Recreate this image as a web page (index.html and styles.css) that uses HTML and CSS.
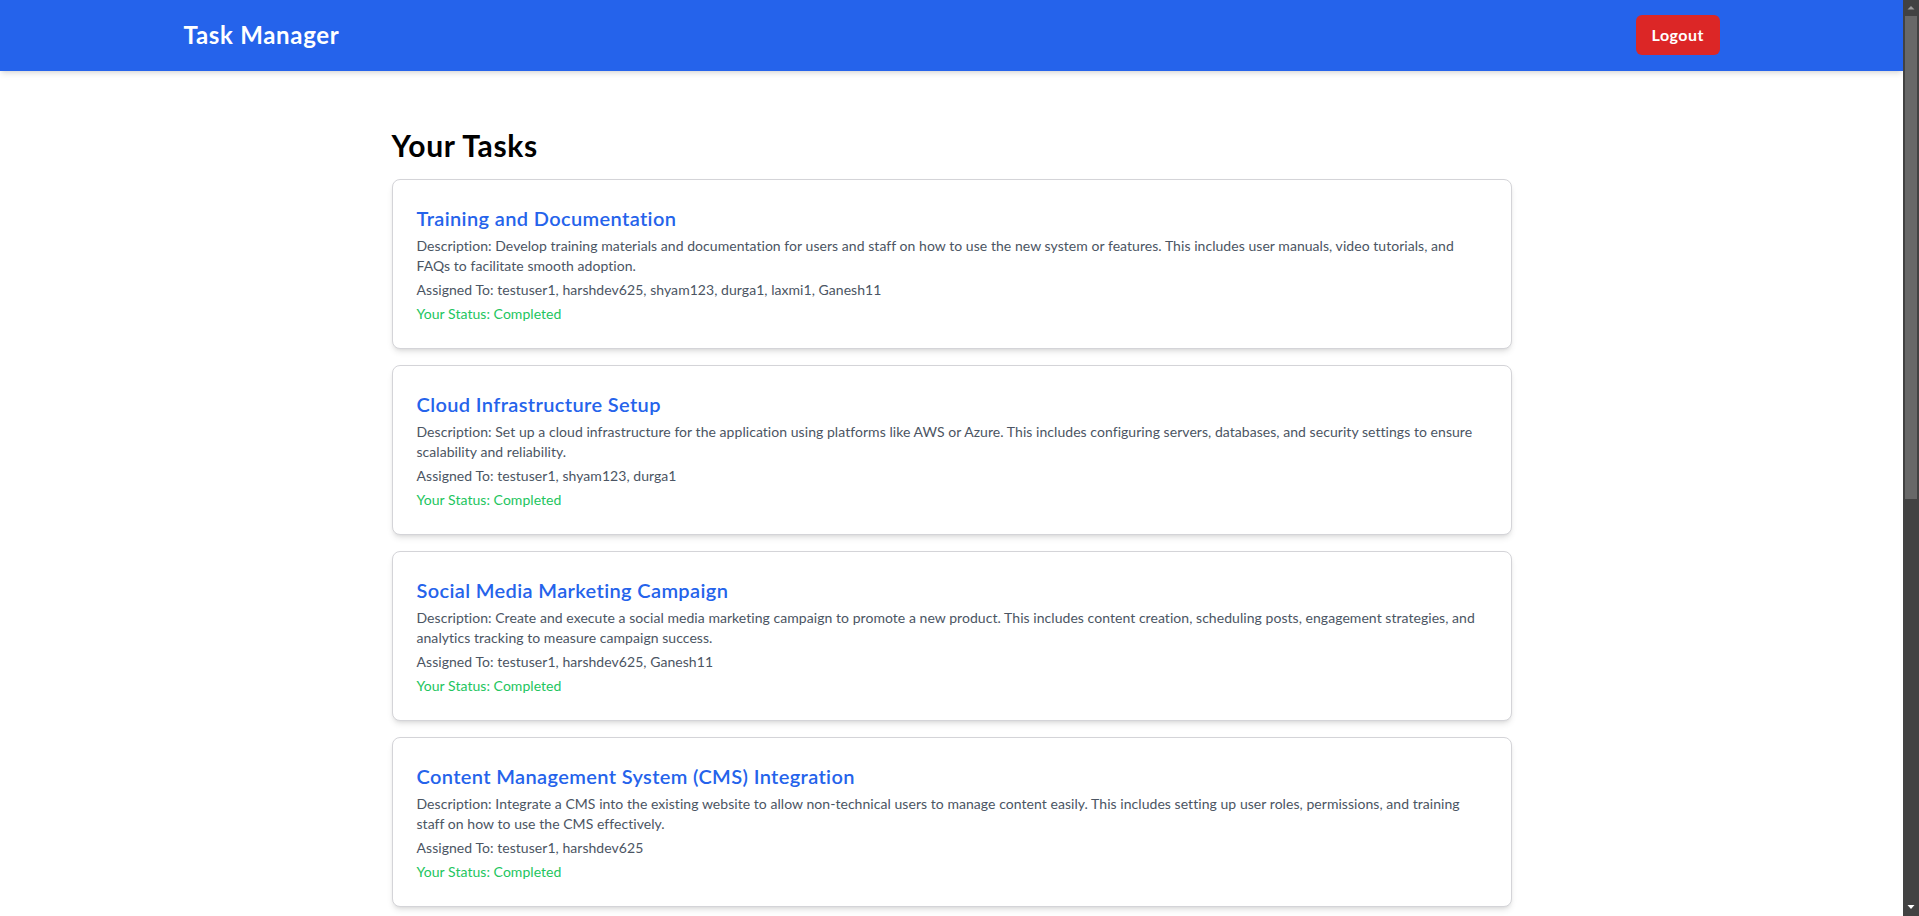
FILE: index.html
```html
<!DOCTYPE html>
<html lang="en">
<head>
<meta charset="utf-8">
<title>Task Manager</title>
<link rel="stylesheet" href="styles.css">
</head>
<body>
<div class="viewport">
  <header class="topbar">
    <div class="topbar-inner">
      <h1 class="brand">Task Manager</h1>
      <button class="logout" type="button">Logout</button>
    </div>
  </header>
  <main class="page">
    <h2 class="page-title">Your Tasks</h2>
    <ul class="task-list">
      <li class="task-card">
        <h3 class="task-title">Training and Documentation</h3>
        <p class="task-text">Description: Develop training materials and documentation for users and staff on how to use the new system or features. This includes user manuals, video tutorials, and<br>FAQs to facilitate smooth adoption.</p>
        <p class="task-text">Assigned To: testuser1, harshdev625, shyam123, durga1, laxmi1, Ganesh11</p>
        <p class="task-status">Your Status: Completed</p>
      </li>
      <li class="task-card">
        <h3 class="task-title">Cloud Infrastructure Setup</h3>
        <p class="task-text">Description: Set up a cloud infrastructure for the application using platforms like AWS or Azure. This includes configuring servers, databases, and security settings to ensure<br>scalability and reliability.</p>
        <p class="task-text">Assigned To: testuser1, shyam123, durga1</p>
        <p class="task-status">Your Status: Completed</p>
      </li>
      <li class="task-card">
        <h3 class="task-title">Social Media Marketing Campaign</h3>
        <p class="task-text">Description: Create and execute a social media marketing campaign to promote a new product. This includes content creation, scheduling posts, engagement strategies, and<br>analytics tracking to measure campaign success.</p>
        <p class="task-text">Assigned To: testuser1, harshdev625, Ganesh11</p>
        <p class="task-status">Your Status: Completed</p>
      </li>
      <li class="task-card">
        <h3 class="task-title">Content Management System (CMS) Integration</h3>
        <p class="task-text">Description: Integrate a CMS into the existing website to allow non-technical users to manage content easily. This includes setting up user roles, permissions, and training<br>staff on how to use the CMS effectively.</p>
        <p class="task-text">Assigned To: testuser1, harshdev625</p>
        <p class="task-status">Your Status: Completed</p>
      </li>
    </ul>
  </main>
</div>
<div class="scrollbar" aria-hidden="true">
  <div class="sb-button">
    <svg width="16" height="16" viewBox="0 0 16 16"><path d="M4.5 9.5h7L8 6z" fill="#9a9a9a"/></svg>
  </div>
  <div class="sb-thumb"></div>
  <div class="sb-track"></div>
  <div class="sb-button">
    <svg width="16" height="16" viewBox="0 0 16 16"><path d="M4.5 5h7L8 9z" fill="#ffffff"/></svg>
  </div>
</div>
</body>
</html>
```
FILE: styles.css
```css
*, *::before, *::after { box-sizing: border-box; }

html, body {
  margin: 0;
  padding: 0;
  background: #ffffff;
  font-family: Lato, "Noto Sans", sans-serif;
  color: #111827;
}

body {
  display: grid;
  grid-template-columns: 1fr 16px;
  height: 100vh;
  overflow: hidden;
}

.viewport {
  min-width: 0;
  overflow: hidden;
}

/* scrollbar column (drawn, headless browsers hide the native one) */
.scrollbar {
  display: flex;
  flex-direction: column;
  background: #424242;
}
.sb-button {
  height: 16px;
  flex: none;
  display: flex;
}
.sb-button svg { display: block; }
.sb-thumb {
  height: 483px;
  flex: none;
  margin: 0 2px;
  background: #686868;
}
.sb-track { flex: 1; }

.topbar {
  background: #2563eb;
  box-shadow: 0 4px 6px -1px rgba(0,0,0,0.1), 0 2px 4px -2px rgba(0,0,0,0.1);
  padding: 15px 0 16px;
}
.topbar-inner {
  max-width: 1536px;
  margin: 0 auto;
  display: flex;
  align-items: center;
  justify-content: space-between;
}
.brand {
  margin: 0;
  color: #ffffff;
  font-size: 24px;
  line-height: 32px;
  font-weight: 700;
  letter-spacing: 0.7px;
}
.logout {
  background: #dc2626;
  color: #ffffff;
  border: 0;
  border-radius: 6px;
  padding: 8px 16px;
  width: 84px;
  font-family: inherit;
  font-size: 16px;
  line-height: 24px;
  font-weight: 700;
  letter-spacing: 0.5px;
}

.page {
  max-width: 1152px;
  margin: 0 auto;
  padding: 56px 16px 16px;
}
.page-title {
  margin: 0 0 16px;
  font-size: 30px;
  line-height: 36px;
  font-weight: 700;
  color: #000000;
  letter-spacing: 0.7px;
}
.task-list {
  list-style: none;
  margin: 0;
  padding: 0;
  display: flex;
  flex-direction: column;
  gap: 16px;
}
.task-card {
  background: #ffffff;
  border: 1px solid #d4d4d8;
  border-radius: 8px;
  box-shadow: 0 4px 6px -1px rgba(0,0,0,0.1), 0 2px 4px -2px rgba(0,0,0,0.1);
  padding: 24px;
}
.task-title {
  margin: 0 0 4px;
  font-size: 20px;
  line-height: 28px;
  font-weight: 600;
  color: #2563eb;
  letter-spacing: 0.37px;
}
.task-text {
  margin: 0 0 4px;
  font-size: 14px;
  line-height: 20px;
  color: #4b5563;
  letter-spacing: 0.05px;
  white-space: nowrap;
}
.task-status {
  margin: 0;
  font-size: 14px;
  line-height: 20px;
  color: #22c55e;
  letter-spacing: 0.05px;
}
```
